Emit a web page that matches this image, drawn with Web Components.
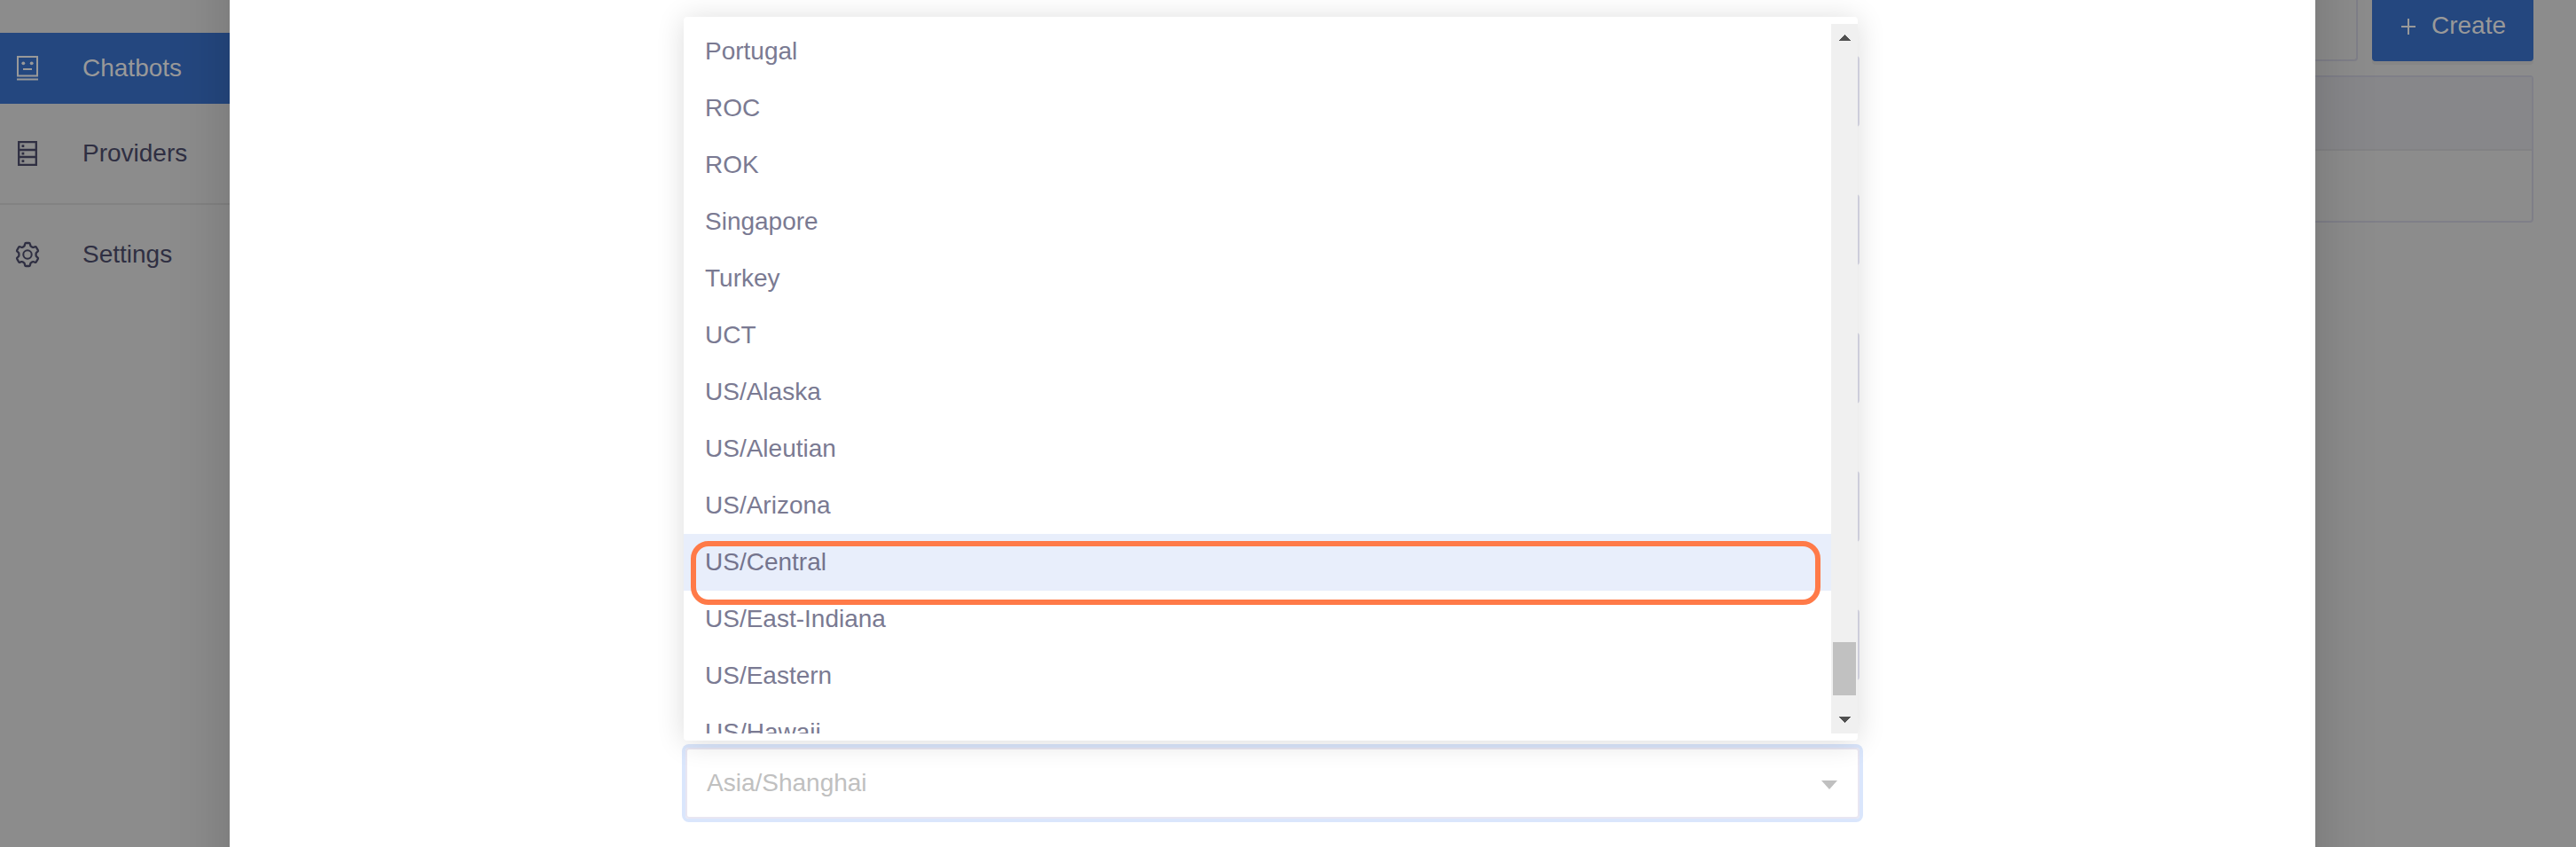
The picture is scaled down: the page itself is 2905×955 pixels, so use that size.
<!DOCTYPE html>
<html lang="en">
<head>
<meta charset="utf-8">
<title>Chatbots</title>
<style>
html,body{margin:0;height:100%;overflow:hidden;background:#8c8c8c}
body{font:28px/1.5 "Liberation Sans",Arial,sans-serif}
</style>
</head>
<body>
<chat-app></chat-app>
<script>
const define = (name, html, setup) => customElements.define(name, class extends HTMLElement {
  connectedCallback() {
    if (this.shadowRoot) return;
    const t = document.createElement('template');
    t.innerHTML = html;
    this.attachShadow({mode: 'open'}).append(t.content.cloneNode(true));
    if (setup) setup(this, this.shadowRoot);
  }
});

define('nav-item', `<style>
:host{display:flex;align-items:center;height:80px;padding-left:16px;box-sizing:border-box;color:#2f2f42}
:host([active]){background:#24477f;color:#999}
.icon{display:flex;width:30px;height:30px;margin-right:47px}
</style><span class="icon"><slot name="icon"></slot></span><span><slot></slot></span>`);

define('side-nav', `<style>
:host{display:flex;flex-direction:column;width:259px;padding-top:37px;box-sizing:border-box;background:#8c8c8c}
nav-item{flex:none}
hr{width:100%;height:2px;border:0;margin:16px 0;background:#828282}
.gap{height:16px}
svg{display:block;width:30px;height:30px;fill:none;stroke:currentColor;stroke-width:2}
</style>
<nav-item active><svg slot="icon" viewBox="0 0 30 30"><path d="M4 2h22v21.500H4zM3 27.500h24M10 16h10"/><g fill="currentColor" stroke="none"><circle cx="10.300" cy="9.300" r="1.900"/><circle cx="19.700" cy="9.300" r="1.900"/></g></svg>Chatbots</nav-item>
<div class="gap"></div>
<nav-item><svg slot="icon" viewBox="0 0 30 30"><path stroke-width="2.300" d="M5.200 2.200h19.600v25.600H5.200zM5 11h20M5 19h20"/><path fill="currentColor" stroke="none" d="M8.500 5.200h2.800v2.800H8.500zM8.500 13.700h2.800v2.800H8.500zM8.500 22.200h2.800v2.800H8.500z"/></svg>Providers</nav-item>
<hr>
<nav-item><svg slot="icon" viewBox="0 0 30 30"><path stroke-linejoin="round" stroke-width="2.300" d="M13.300 2h3.400q1 0 1.200 1l.4 1.700q.2.900 1 1.300l1.200.7q.8.400 1.600.1l1.300-.5q1-.4 1.500.5l1.900 3.300q.5.900-.3 1.500l-1.200 1q-.7.600-.7 1.400v2q0 .8.700 1.400l1.200 1q.8.600.3 1.500l-1.900 3.300q-.5.900-1.500.5l-1.300-.5q-.8-.3-1.600.1l-1.200.7q-.8.400-1 1.300l-.4 1.700q-.2 1-1.200 1h-3.400q-1 0-1.200-1l-.4-1.700q-.2-.9-1-1.300l-1.200-.7q-.8-.4-1.600-.1l-1.300.5q-1 .4-1.500-.5l-1.900-3.300q-.5-.9.300-1.500l1.200-1q.7-.6.700-1.400v-2q0-.8-.7-1.400l-1.200-1q-.8-.6-.3-1.500l1.900-3.300q.5-.9 1.500-.5l1.300.5q.8.300 1.600-.1l1.200-.7q.8-.4 1-1.300l.4-1.700q.2-1 1.200-1z"/><circle cx="15" cy="15" r="4.700"/></svg>Settings</nav-item>`);

define('page-side', `<style>
:host{display:flex;flex-direction:column;width:294px;background:#8c8c8c}
.bar{display:flex;gap:16px;height:69px}
.field{width:48px;box-sizing:border-box;border:solid #7f7f88;border-width:0 2px 2px 0;border-radius:0 0 4px 0}
.btn{display:flex;align-items:center;width:182px;height:80px;margin-top:-11px;box-sizing:border-box;padding-left:32px;background:#24477f;color:#999;border-radius:4px;box-shadow:0 4px 0 #868686}
.btn svg{width:18px;height:18px;margin-right:17px;margin-top:2px}
.table{width:246px;height:166px;margin-top:16px;box-sizing:border-box;border:2px solid #7f7f88;border-left:0;border-radius:0 4px 4px 0}
.head{height:81px;background:#87878a;border-bottom:2px solid #828284}
</style>
<div class="bar"><div class="field"></div><div class="btn"><svg viewBox="0 0 18 18"><path d="M9 0v18M1 9h16" stroke="currentColor" stroke-width="2"/></svg><span>Create</span></div></div>
<div class="table"><div class="head"></div></div>`);

define('zone-option', `<style>
:host{display:block;flex:none;height:64px;line-height:63px;padding-left:24px;color:#7a7a92}
:host([active]){background:#e8eefb;color:#74748d}
</style><slot></slot>`);

define('scroll-bar', `<style>
:host{display:flex;flex-direction:column;align-items:center;width:30px;flex:none;background:#f0f0f0}
svg{width:14px;height:7px;fill:#505050;shape-rendering:crispEdges}
.up{margin-top:12px}.down{margin-top:24px}
.thumb{width:26px;height:60px;margin-top:678px;background:#c1c1c1}
</style><svg class="up" viewBox="0 0 14 7"><path d="M0 7L7 0l7 7z"/></svg><div class="thumb"></div><svg class="down" viewBox="0 0 14 7"><path d="M0 0h14L7 7z"/></svg>`);

define('zone-menu', `<style>
:host{display:block;padding:8px 0;background:#fff;border-radius:4px;box-shadow:0 2px 32px rgba(0,0,0,.14)}
.view{display:flex;height:800px;overflow:hidden}
.list{flex:1;display:flex;flex-direction:column;margin-top:-1px}
</style><div class="view"><div class="list"></div><scroll-bar></scroll-bar></div>`, (host, root) => {
  const list = root.querySelector('.list');
  for (const name of ['Portugal','ROC','ROK','Singapore','Turkey','UCT','US/Alaska','US/Aleutian','US/Arizona','US/Central','US/East-Indiana','US/Eastern','US/Hawaii']) {
    const o = document.createElement('zone-option');
    o.textContent = name;
    if (name === 'US/Central') o.setAttribute('active', '');
    list.append(o);
  }
});

define('form-field', `<style>
:host{display:flex;align-items:center;justify-content:space-between;height:80px;box-sizing:border-box;border:2px solid #dcdcea;border-radius:4px;padding:0 23px 0 22px;color:#c0c0c0}
:host([focused]){border-color:#e8e6f2;box-shadow:0 0 0 4px #dae6fc}
svg{display:none;width:18px;height:10px;margin-top:3px;fill:#c0c0c0}
:host([focused]) svg{display:block}
</style><span><slot></slot></span><svg viewBox="0 0 18 10"><path d="M0 0h18l-9 10z"/></svg>`);

define('modal-dialog', `<style>
:host{display:block;position:relative;z-index:1;width:2352px;height:955px;background:#fff}
.shade{position:absolute;z-index:-1;left:0;right:0;top:-80px;bottom:-80px;background:#fff;box-shadow:0 0 64px rgba(0,0,0,.18)}
.form{display:flex;flex-direction:column;gap:76px;width:1324px;margin-left:514px;padding-top:63px}
zone-menu{position:absolute;left:512px;top:19px;width:1324px}
.mark{position:absolute;left:520px;top:610px;width:1274px;height:72px;box-sizing:border-box;border:6px solid #ff7a48;border-radius:20px}
</style><div class="shade"></div>
<div class="form"><form-field></form-field><form-field></form-field><form-field></form-field><form-field></form-field><form-field></form-field><form-field focused>Asia/Shanghai</form-field></div>
<zone-menu></zone-menu><div class="mark"></div>`);

define('chat-app', `<style>
:host{display:flex;width:2905px;height:955px;overflow:hidden}
side-nav,modal-dialog,page-side{flex:none}
</style><side-nav></side-nav><modal-dialog></modal-dialog><page-side></page-side>`);
</script>
</body>
</html>
